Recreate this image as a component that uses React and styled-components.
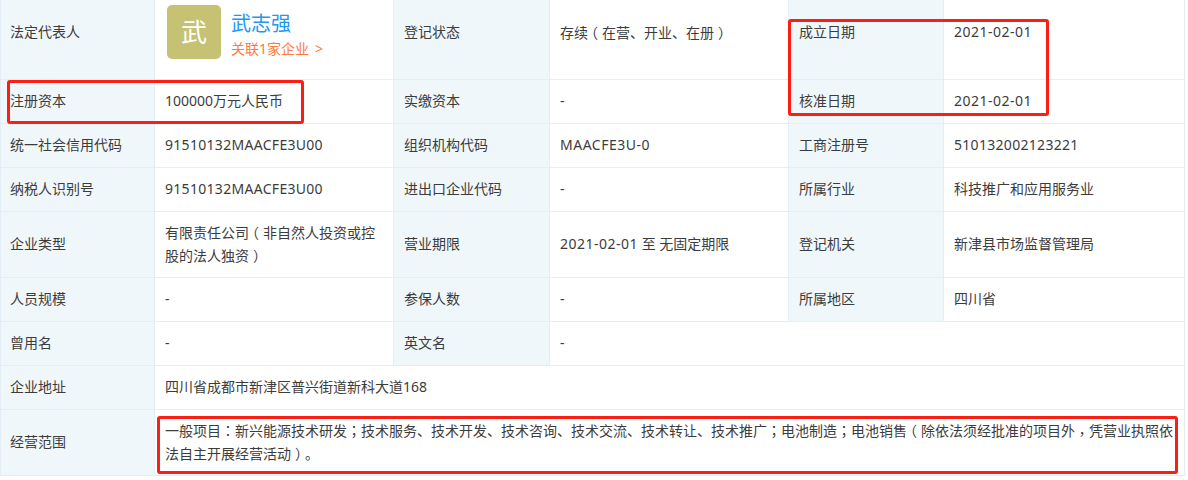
import React from 'react';
import styled, { createGlobalStyle } from 'styled-components';

const GlobalStyle = createGlobalStyle`
html, body {
    margin: 0;
    padding: 0;
    background: #fff;
    overflow: hidden;
}
body {
    font-family: "Noto Sans", "Noto Sans CJK SC", sans-serif;
    font-size: 14px;
    color: #3c3c3c;
    text-spacing-trim: space-all;
}
`

const Page = styled.div`
position: relative;
width: 1188px;
height: 480px;
overflow: hidden;
`

const Table = styled.table`
width: 1185px;
margin-top: -14px;
table-layout: fixed;
border-collapse: collapse;
border: 1px solid #e4eef6;
border-left: 0;
td:first-child{
    padding-left: 9px;
}
`

const Label = styled.td`
background: #f0f7fb;
border: 1px solid #e4eef6;
padding: 0 10px 2px;
line-height: 22px;
vertical-align: middle;
`

const Value = styled.td`
border: 1px solid #e4eef6;
padding: 0 10px 2px;
line-height: 22px;
vertical-align: middle;
`

const Row = styled.tr`
height: ${props => props.$h}px;
`

// codes run a little wider than the cjk text around them, hyphens more so
const Code = styled.span`
letter-spacing: ${props => props.$hyphen ? 0.5 : 0.3}px;
`

// these marks sit in the middle of their cell in the picture
const Punct = styled.span`
position: relative;
left: ${props => props.$dx || 0}px;
top: ${props => props.$dy || 0}px;
font-family: "Noto Sans CJK TC", sans-serif;
`

const Boss = styled.div`
display: flex;
gap: 10px;
align-items: flex-start;
padding-left: 2px;
`

const Avatar = styled.div`
width: 54px;
height: 54px;
border-radius: 5px;
background: #c6c274;
color: #fff;
font-size: 26px;
line-height: 54px;
text-align: center;
`

const BossName = styled.div`
color: #2196f3;
font-size: 20px;
line-height: 24px;
margin-top: 7px;
`

const BossLink = styled.div`
color: #ff7a3d;
font-size: 14px;
line-height: 22px;
margin-top: 2px;
`

const Arrow = styled.span`
margin-left: 6px;
`

const Highlight = styled.div`
position: absolute;
left: ${props => props.$x}px;
top: ${props => props.$y}px;
width: ${props => props.$w}px;
height: ${props => props.$h}px;
box-sizing: border-box;
border: 3px solid #fa1e14;
border-radius: 3px;
pointer-events: none;
`

const nudge = {
    '（': { $dx: -4 },
    '）': { $dx: 4 },
    '，': { $dy: 3 },
}

const Text = ({ children }) => (
    <>
        {children.split('\n').map((line, l) => (
            <React.Fragment key={l}>
                {l > 0 && <br />}
                {line.split(/([（）：；，])/).map((part, i) => (
                    i % 2 ? <Punct key={i} {...nudge[part]}>{part}</Punct> : part
                ))}
            </React.Fragment>
        ))}
    </>
)

const rows = [
    [44, '注册资本', '100000万元人民币', '实缴资本', '-', '核准日期', <Code $hyphen>2021-02-01</Code>],
    [44, '统一社会信用代码', <Code>91510132MAACFE3U00</Code>, '组织机构代码', <Code $hyphen>MAACFE3U-0</Code>, '工商注册号', <Code>510132002123221</Code>],
    [44, '纳税人识别号', <Code>91510132MAACFE3U00</Code>, '进出口企业代码', '-', '所属行业', '科技推广和应用服务业'],
    [66, '企业类型', <Text>{'有限责任公司（非自然人投资或控\n股的法人独资）'}</Text>, '营业期限', <><Code $hyphen>2021-02-01</Code> 至 无固定期限</>, '登记机关', '新津县市场监督管理局'],
    [44, '人员规模', '-', '参保人数', '-', '所属地区', '四川省'],
]

const App = () => {
    return (
        <Page>
            <GlobalStyle />
            <Table>
                <colgroup>
                    <col style={{ width: 154 }} />
                    <col style={{ width: 239 }} />
                    <col style={{ width: 156 }} />
                    <col style={{ width: 239 }} />
                    <col style={{ width: 155 }} />
                    <col />
                </colgroup>
                <tbody>
                    <Row $h={93}>
                        <Label>法定代表人</Label>
                        <Value>
                            <Boss>
                                <Avatar>武</Avatar>
                                <div>
                                    <BossName>武志强</BossName>
                                    <BossLink>关联1家企业<Arrow>&gt;</Arrow></BossLink>
                                </div>
                            </Boss>
                        </Value>
                        <Label>登记状态</Label>
                        <Value><Text>存续（在营、开业、在册）</Text></Value>
                        <Label>成立日期</Label>
                        <Value><Code $hyphen>2021-02-01</Code></Value>
                    </Row>
                    {rows.map(r => (
                        <Row $h={r[0]} key={r[1]}>
                            <Label>{r[1]}</Label>
                            <Value>{r[2]}</Value>
                            <Label>{r[3]}</Label>
                            <Value>{r[4]}</Value>
                            <Label>{r[5]}</Label>
                            <Value>{r[6]}</Value>
                        </Row>
                    ))}
                    <Row $h={44}>
                        <Label>曾用名</Label>
                        <Value>-</Value>
                        <Label>英文名</Label>
                        <Value colSpan={3}>-</Value>
                    </Row>
                    <Row $h={44}>
                        <Label>企业地址</Label>
                        <Value colSpan={5}>四川省成都市新津区普兴街道新科大道168</Value>
                    </Row>
                    <Row $h={66}>
                        <Label>经营范围</Label>
                        <Value colSpan={5}><Text>{'一般项目：新兴能源技术研发；技术服务、技术开发、技术咨询、技术交流、技术转让、技术推广；电池制造；电池销售（除依法须经批准的项目外，凭营业执照依\n法自主开展经营活动）。'}</Text></Value>
                    </Row>
                </tbody>
            </Table>
            <Highlight $x={7} $y={80} $w={297} $h={44} />
            <Highlight $x={788} $y={19} $w={261} $h={97} />
            <Highlight $x={157} $y={416} $w={1021} $h={58} />
        </Page>
    )
};
export default App
